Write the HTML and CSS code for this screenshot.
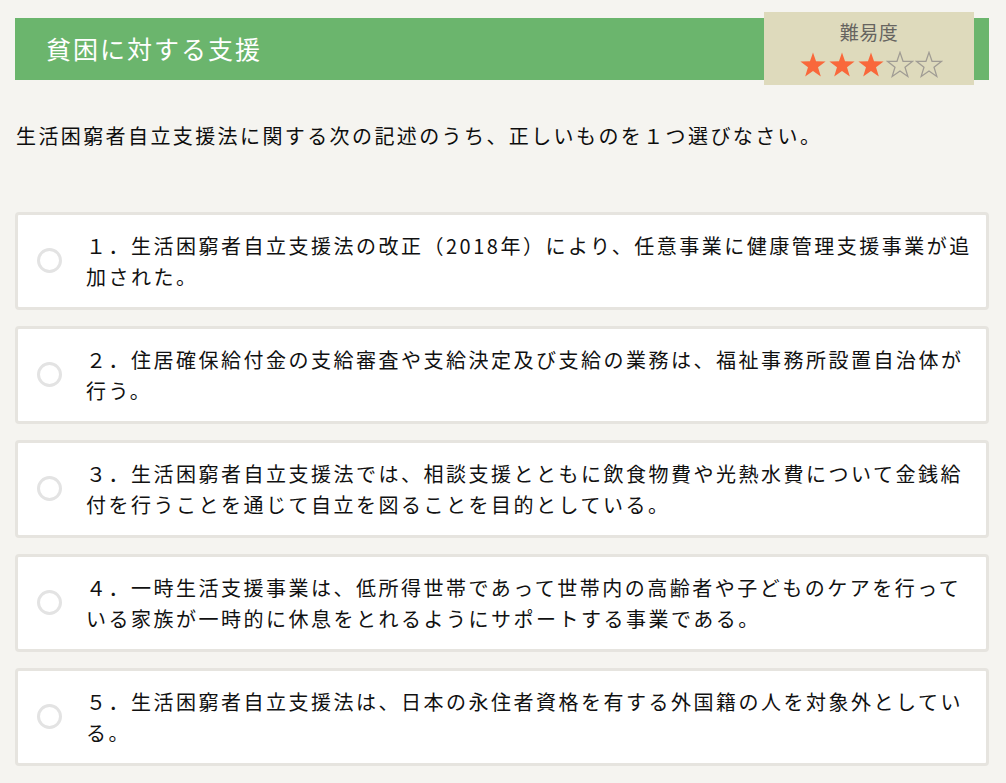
FILE: index.html
```html
<!DOCTYPE html>
<html lang="ja">
<head>
<meta charset="utf-8">
<title>貧困に対する支援</title>
<link rel="stylesheet" href="styles.css">
</head>
<body>
<div class="page">
  <div class="header">
    <h1 class="title">貧困に対する支援</h1>
    <div class="difficulty">
      <div class="diff-label">難易度</div>
      <div class="stars">
        <svg class="star" viewBox="0 0 24 24"><polygon class="on" points="12,1.2 14.6,8.8 22.8,8.9 16.3,13.9 18.7,21.8 12,17.1 5.3,21.8 7.7,13.9 1.2,8.9 9.4,8.8"/></svg>
        <svg class="star" viewBox="0 0 24 24"><polygon class="on" points="12,1.2 14.6,8.8 22.8,8.9 16.3,13.9 18.7,21.8 12,17.1 5.3,21.8 7.7,13.9 1.2,8.9 9.4,8.8"/></svg>
        <svg class="star" viewBox="0 0 24 24"><polygon class="on" points="12,1.2 14.6,8.8 22.8,8.9 16.3,13.9 18.7,21.8 12,17.1 5.3,21.8 7.7,13.9 1.2,8.9 9.4,8.8"/></svg>
        <svg class="star" viewBox="0 0 24 24"><polygon class="off" points="12,1.2 14.6,8.8 22.8,8.9 16.3,13.9 18.7,21.8 12,17.1 5.3,21.8 7.7,13.9 1.2,8.9 9.4,8.8"/></svg>
        <svg class="star" viewBox="0 0 24 24"><polygon class="off" points="12,1.2 14.6,8.8 22.8,8.9 16.3,13.9 18.7,21.8 12,17.1 5.3,21.8 7.7,13.9 1.2,8.9 9.4,8.8"/></svg>
      </div>
    </div>
  </div>

  <p class="question">生活困窮者自立支援法に関する次の記述のうち、正しいものを１つ選びなさい。</p>

  <ul class="options">
    <li class="option"><span class="radio"></span><span class="opt-text">１．生活困窮者自立支援法の改正（2018年）により、任意事業に健康管理支援事業が追加された。</span></li>
    <li class="option"><span class="radio"></span><span class="opt-text">２．住居確保給付金の支給審査や支給決定及び支給の業務は、福祉事務所設置自治体が行う。</span></li>
    <li class="option"><span class="radio"></span><span class="opt-text">３．生活困窮者自立支援法では、相談支援とともに飲食物費や光熱水費について金銭給付を行うことを通じて自立を図ることを目的としている。</span></li>
    <li class="option"><span class="radio"></span><span class="opt-text">４．一時生活支援事業は、低所得世帯であって世帯内の高齢者や子どものケアを行っている家族が一時的に休息をとれるようにサポートする事業である。</span></li>
    <li class="option"><span class="radio"></span><span class="opt-text">５．生活困窮者自立支援法は、日本の永住者資格を有する外国籍の人を対象外としている。</span></li>
  </ul>
</div>
</body>
</html>
```

FILE: styles.css
```css
* { box-sizing: border-box; }
html, body {
  margin: 0;
  padding: 0;
  background: #f5f4f0;
}
body {
  font-family: "Noto Sans CJK JP", "Noto Sans", sans-serif;
  color: #111;
}
.page {
  width: 974px;
  margin-left: 15px;
  padding-top: 18px;
}
.header {
  position: relative;
  height: 62px;
  background: #6bb56d;
  display: flex;
  align-items: center;
  padding-left: 31px;
}
.title {
  margin: 0;
  font-size: 25px;
  font-weight: 400;
  color: #ffffff;
  letter-spacing: 2px;
  line-height: 1;
  padding-bottom: 1px;
}
.difficulty {
  position: absolute;
  top: -6px;
  right: 15px;
  width: 210px;
  height: 73px;
  background: #dedabc;
  display: flex;
  flex-direction: column;
  align-items: center;
  padding-top: 8px;
}
.diff-label {
  font-size: 19px;
  line-height: 24px;
  color: #666460;
  letter-spacing: 0.5px;
}
.stars {
  display: flex;
  gap: 1px;
  margin-top: 7px;
  margin-left: 4px;
}
.star {
  width: 28px;
  height: 28px;
  display: block;
}
.star .on {
  fill: #f9683b;
}
.star .off {
  fill: none;
  stroke: #a09c94;
  stroke-width: 1.1;
  stroke-linejoin: miter;
}
.question {
  margin: 41px 0 0 1px;
  font-size: 20px;
  line-height: 30px;
  letter-spacing: 2.4px;
  color: #0d0d0d;
}
.options {
  list-style: none;
  margin: 61px 0 0 0;
  padding: 0;
  display: flex;
  flex-direction: column;
  gap: 16px;
}
.option {
  display: flex;
  align-items: center;
  min-height: 98px;
  background: #ffffff;
  border: 3px solid #e6e4df;
  border-radius: 4px;
  padding: 14px 10px 15px 19px;
}
.radio {
  flex: none;
  width: 25px;
  height: 25px;
  border: 3px solid #e3e3e3;
  border-radius: 50%;
  margin-right: 24px;
}
.opt-text {
  flex: 1;
  font-size: 20px;
  line-height: 31px;
  letter-spacing: 2.5px;
  color: #111;
}
```
